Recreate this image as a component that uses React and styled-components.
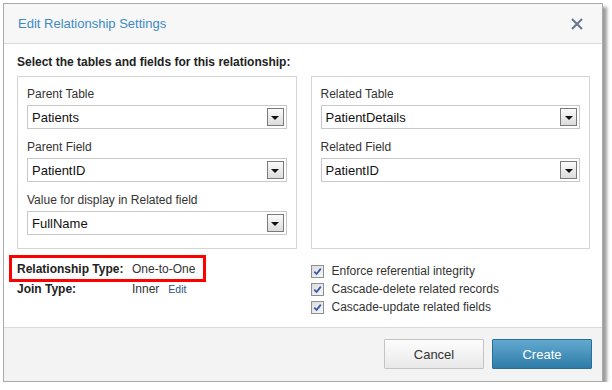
import styled, { createGlobalStyle } from 'styled-components';

const GlobalStyle = createGlobalStyle`
  html, body {
    margin: 0;
    background: #fff;
  }
  body {
    font-family: 'Liberation Sans', Arial, sans-serif;
    color: #333;
  }
`;

const Page = styled.div`
  padding: 3px 0 0 3px;
`;

const Dialog = styled.div`
  width: 598px;
  border: 1px solid #a9a9a9;
  background: #fff;
  box-shadow: 4px 4px 3px rgba(0, 0, 0, 0.38);
`;

const Header = styled.div`
  height: 39px;
  display: flex;
  align-items: center;
  justify-content: space-between;
  padding: 0 14px 0 14px;
  background: #f7f7f7;
  border-bottom: 1px solid #dcdcdc;
`;

const Title = styled.h1`
  margin: 0;
  font-size: 13px;
  font-weight: normal;
  color: #3f8ac3;
`;

const Close = styled.button`
  display: flex;
  align-items: center;
  justify-content: center;
  width: 16px;
  height: 16px;
  padding: 0;
  margin-right: 3px;
  border: 0;
  background: none;
  cursor: pointer;
`;

const Body = styled.div`
  padding: 11px 12px 11px 13px;
`;

const SectionTitle = styled.div`
  font-size: 12px;
  line-height: 14px;
  font-weight: bold;
  color: #222;
  margin-bottom: 7px;
`;

const Columns = styled.div`
  display: grid;
  grid-template-columns: 1fr 1fr;
  column-gap: 14px;
`;

const Panel = styled.div`
  border: 1px solid #d5d5d5;
  padding: 10px 9px 13px 9px;
  display: flex;
  flex-direction: column;
  gap: 11px;
`;

const Field = styled.div`
  display: flex;
  flex-direction: column;
  gap: 4px;
`;

const Label = styled.label`
  font-size: 12px;
  line-height: 14px;
  color: #333;
`;

const Select = styled.div`
  height: 22px;
  border: 1px solid #c8c8c8;
  display: flex;
  align-items: center;
  justify-content: space-between;
  padding: 0 2px 0 4px;
  font-size: 13px;
  color: #111;
  background: #fff;
`;

const ArrowBox = styled.span`
  width: 15px;
  height: 16px;
  border: 1px solid #7a7a7a;
  background: linear-gradient(#fbfbfb, #dcdcdc);
  display: flex;
  align-items: center;
  justify-content: center;

  &::after {
    content: '';
    border-left: 4px solid transparent;
    border-right: 4px solid transparent;
    border-top: 4px solid #111;
    margin-top: 1px;
  }
`;

const Lower = styled.div`
  display: grid;
  grid-template-columns: 1fr 1fr;
  column-gap: 14px;
  margin-top: 6px;
`;

const InfoList = styled.div`
  display: flex;
  flex-direction: column;
`;

const InfoRow = styled.div`
  display: flex;
  align-items: center;
  font-size: 12px;
  line-height: 14px;
  width: fit-content;
  ${({ $highlight }) =>
    $highlight
      ? `
    border: 3px solid #ff0000;
    height: 21px;
    padding: 0 8px 0 5px;
    margin-left: -8px;
  `
      : `
    height: 14px;
  `}
`;

const InfoLabel = styled.span`
  width: 115px;
  font-weight: bold;
  color: #222;
`;

const InfoValue = styled.span`
  color: #333;
`;

const EditLink = styled.a`
  margin-left: 9px;
  font-size: 10.5px;
  color: #2c5680;
  text-decoration: none;
  cursor: pointer;
`;

const CheckList = styled.div`
  padding-top: 7px;
  display: flex;
  flex-direction: column;
`;

const CheckRow = styled.label`
  display: flex;
  align-items: center;
  height: 18px;
  font-size: 12px;
  color: #333;
  gap: 8px;
`;

const CheckBox = styled.span`
  width: 11px;
  height: 11px;
  border: 1px solid #8d8f91;
  background: linear-gradient(135deg, #dcdcdc, #f6f6f6);
  display: flex;
  align-items: center;
  justify-content: center;
`;

const Footer = styled.div`
  border-top: 1px solid #dadada;
  background: #f3f3f3;
  padding: 11px 10px 12px 0;
  display: flex;
  justify-content: flex-end;
  gap: 8px;
`;

const Button = styled.button`
  width: 100px;
  height: 30px;
  font-family: 'Liberation Sans', Arial, sans-serif;
  font-size: 13px;
  border-radius: 1px;
  cursor: pointer;
  border: 1px solid ${({ $primary }) => ($primary ? '#2a6e96' : '#c4c4c4')};
  color: ${({ $primary }) => ($primary ? '#fff' : '#333')};
  background: ${({ $primary }) =>
    $primary
      ? 'linear-gradient(#63a9d0, #2d7ca8)'
      : 'linear-gradient(#fdfdfd, #e8e8e8)'};
`;

function Dropdown({ value }) {
  return (
    <Select>
      <span>{value}</span>
      <ArrowBox />
    </Select>
  );
}

function Check({ children }) {
  return (
    <CheckRow>
      <CheckBox>
        <svg width="9" height="9" viewBox="0 0 9 9">
          <path d="M1.3 4.6 L3.6 7 L7.8 1.6" fill="none" stroke="#3657a8" strokeWidth="1.8" />
        </svg>
      </CheckBox>
      {children}
    </CheckRow>
  );
}

export default function App() {
  return (
    <Page>
      <GlobalStyle />
      <Dialog>
        <Header>
          <Title>Edit Relationship Settings</Title>
          <Close aria-label="Close">
            <svg width="12" height="12" viewBox="0 0 12 12">
              <path d="M1 1 L11 11 M11 1 L1 11" stroke="#687a8e" strokeWidth="2.2" />
            </svg>
          </Close>
        </Header>
        <Body>
          <SectionTitle>Select the tables and fields for this relationship:</SectionTitle>
          <Columns>
            <Panel>
              <Field>
                <Label>Parent Table</Label>
                <Dropdown value="Patients" />
              </Field>
              <Field>
                <Label>Parent Field</Label>
                <Dropdown value="PatientID" />
              </Field>
              <Field>
                <Label>Value for display in Related field</Label>
                <Dropdown value="FullName" />
              </Field>
            </Panel>
            <Panel>
              <Field>
                <Label>Related Table</Label>
                <Dropdown value="PatientDetails" />
              </Field>
              <Field>
                <Label>Related Field</Label>
                <Dropdown value="PatientID" />
              </Field>
            </Panel>
          </Columns>
          <Lower>
            <InfoList>
              <InfoRow $highlight>
                <InfoLabel>Relationship Type:</InfoLabel>
                <InfoValue>One-to-One</InfoValue>
              </InfoRow>
              <InfoRow>
                <InfoLabel>Join Type:</InfoLabel>
                <InfoValue>Inner</InfoValue>
                <EditLink>Edit</EditLink>
              </InfoRow>
            </InfoList>
            <CheckList>
              <Check>Enforce referential integrity</Check>
              <Check>Cascade-delete related records</Check>
              <Check>Cascade-update related fields</Check>
            </CheckList>
          </Lower>
        </Body>
        <Footer>
          <Button>Cancel</Button>
          <Button $primary>Create</Button>
        </Footer>
      </Dialog>
    </Page>
  );
}
